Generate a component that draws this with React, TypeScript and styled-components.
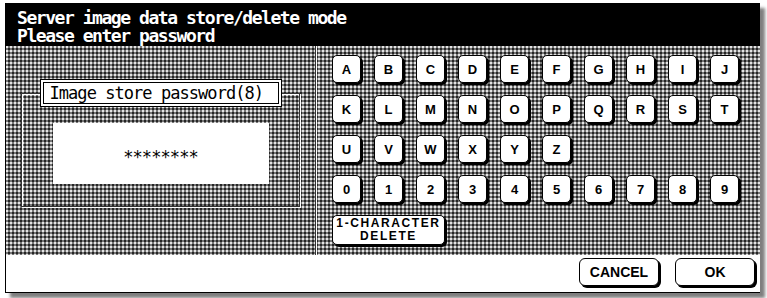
import React from "react";
import styled, { createGlobalStyle } from "styled-components";

const Global = createGlobalStyle`
  html, body { margin: 0; padding: 0; background: #fff; }
  body { width: 767px; height: 298px; overflow: hidden; }
`;

const Frame = styled.div`
  margin: 3px 0 0 5px;
  width: 754px;
  height: 289px;
  border-left: 1px solid #000;
  border-bottom: 1px solid #000;
  display: flex;
  flex-direction: column;
  box-shadow: 5px 5px 3px rgba(0, 0, 0, 0.5);
  background: #fff;
`;

const Header = styled.div`
  height: 43px;
  background: #000;
  color: #fff;
  box-sizing: border-box;
  padding: 6px 0 0 11px;
  font: bold 18px/18px "DejaVu Sans Mono", monospace;
  letter-spacing: -1.45px;
  white-space: pre;
`;

const Main = styled.div`
  height: 209px;
  display: flex;
  background-color: #767676;
  background-image: radial-gradient(circle at 1px 1px, #e8e8e8 0 0.7px, transparent 0.9px),
    radial-gradient(circle at 3px 3px, #222 0 0.7px, transparent 0.9px);
  background-size: 4px 4px;
`;

const LeftPanel = styled.div`
  width: 309px;
  display: flex;
  flex-direction: column;
  align-items: center;
  padding-top: 33px;
  box-sizing: border-box;
`;

const Divider = styled.div`
  width: 1px;
  background: #fff;
  border-left: 1px solid #333;
`;

const Label = styled.div`
  position: relative;
  z-index: 1;
  width: 242px;
  height: 28px;
  box-sizing: border-box;
  background: #fff;
  border: 1px solid #000;
  box-shadow: inset 0 0 0 2px #fff, inset 0 0 0 3px #000;
  display: flex;
  align-items: center;
  padding-left: 9px;
  font: 17px "DejaVu Sans Mono", monospace;
  letter-spacing: -0.95px;
  color: #000;
`;

const Group = styled.div`
  width: 279px;
  height: 114px;
  margin-top: -14px;
  box-sizing: border-box;
  border: 1px solid #333;
  box-shadow: 1px 1px 0 #fff, inset 1px 1px 0 #fff;
  display: flex;
  justify-content: center;
  padding-top: 29px;
`;

const Display = styled.div`
  width: 216px;
  height: 61px;
  background: #fff;
  display: flex;
  align-items: center;
  justify-content: center;
  padding-top: 6px;
  box-sizing: border-box;
  font: 17px "DejaVu Sans Mono", monospace;
  letter-spacing: -0.9px;
  color: #000;
`;

const RightPanel = styled.div`
  flex: 1;
  padding: 9px 0 0 15px;
`;

const Keys = styled.div`
  display: grid;
  grid-template-columns: repeat(10, 29px);
  grid-template-rows: 28px 28px 28px 28px 30px;
  column-gap: 13px;
  row-gap: 12px;
`;

const Key = styled.button<{ $span?: number; $small?: boolean }>`
  grid-column: span ${(p) => p.$span ?? 1};
  margin: 0;
  padding: 0;
  border: 1px solid #000;
  border-radius: 5px;
  background: #fff;
  box-shadow: 2px 2px 0 #000;
  color: #000;
  font-family: "Liberation Sans", Arial, sans-serif;
  font-weight: bold;
  font-size: ${(p) => (p.$small ? "12px" : "13px")};
  line-height: 13px;
  letter-spacing: ${(p) => (p.$small ? "1.6px" : "0")};
  display: flex;
  flex-direction: column;
  align-items: center;
  justify-content: center;
`;

const BottomBar = styled.div`
  flex: 1;
  display: flex;
  justify-content: flex-end;
  align-items: flex-start;
  gap: 16px;
  padding: 3px 5px 0 0;
  background: #fff;
`;

const ActionButton = styled.button`
  width: 80px;
  height: 28px;
  margin: 0;
  padding: 0;
  border: 1px solid #000;
  border-radius: 6px;
  background: #fff;
  box-shadow: 2px 2px 0 #000;
  color: #000;
  font: bold 14px "Liberation Sans", Arial, sans-serif;
`;

const rows = ["ABCDEFGHIJ", "KLMNOPQRST", "UVWXYZ", "0123456789"];

export default function App() {
  return (
    <>
      <Global />
      <Frame>
        <Header>
          {"Server image data store/delete mode\nPlease enter password"}
        </Header>
        <Main>
          <LeftPanel>
            <Label>Image store password(8)</Label>
            <Group>
              <Display>********</Display>
            </Group>
          </LeftPanel>
          <Divider />
          <RightPanel>
            <Keys>
              {rows.map((r, i) => (
                <React.Fragment key={i}>
                  {r.split("").map((c) => (
                    <Key key={c}>{c}</Key>
                  ))}
                  {r.length < 10 && (
                    <div style={{ gridColumn: `span ${10 - r.length}` }} />
                  )}
                </React.Fragment>
              ))}
              <Key $span={3} $small>
                <span>1-CHARACTER</span>
                <span>DELETE</span>
              </Key>
            </Keys>
          </RightPanel>
        </Main>
        <BottomBar>
          <ActionButton>CANCEL</ActionButton>
          <ActionButton>OK</ActionButton>
        </BottomBar>
      </Frame>
    </>
  );
}
